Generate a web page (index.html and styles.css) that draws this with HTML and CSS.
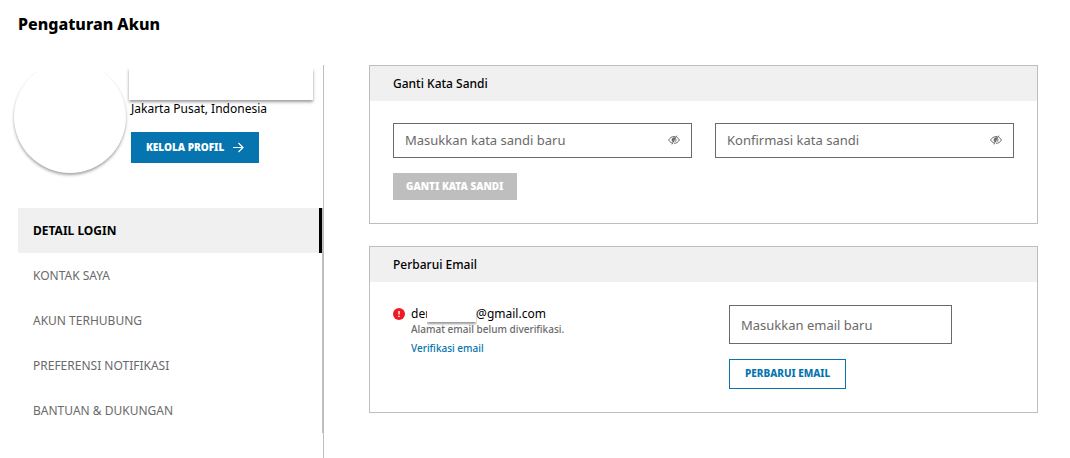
FILE: index.html
```html
<!DOCTYPE html>
<html lang="id">
<head>
    <meta charset="UTF-8">
    <meta name="viewport" content="width=device-width, initial-scale=1.0">
    <title>Pengaturan Akun</title>
    <link rel="stylesheet" href="styles.css">
</head>
<body>
    <h1 class="page-title">Pengaturan Akun</h1>

    <div class="layout">
        <aside class="sidebar">
            <div class="profile">
                <div class="avatar"></div>
                <div class="profile-info">
                    <div class="profile-name"></div>
                    <div class="profile-location">Jakarta Pusat, Indonesia</div>
                    <a class="button button-primary" href="#">
                        KELOLA PROFIL
                        <svg class="arrow" viewBox="0 0 12 12" aria-hidden="true">
                            <path d="M1 6.5h10M6.5 2L11 6.5 6.5 11"/>
                        </svg>
                    </a>
                </div>
            </div>

            <nav class="menu">
                <a class="menu-item active" href="#">DETAIL LOGIN</a>
                <a class="menu-item" href="#">KONTAK SAYA</a>
                <a class="menu-item" href="#">AKUN TERHUBUNG</a>
                <a class="menu-item" href="#">PREFERENSI NOTIFIKASI</a>
                <a class="menu-item" href="#">BANTUAN &amp; DUKUNGAN</a>
            </nav>
        </aside>

        <main class="content">
            <section class="card">
                <h2 class="card-title">Ganti Kata Sandi</h2>
                <form class="card-body">
                    <div class="password-row">
                        <div class="field">
                            <input class="field-input" type="password" placeholder="Masukkan kata sandi baru" aria-label="Masukkan kata sandi baru">
                            <button class="eye-button" type="button" aria-label="Tampilkan kata sandi">
                                <svg class="eye" viewBox="0 0 12 10" aria-hidden="true">
                                    <path d="M4.4 8.2C2.6 7.5 1.2 6.2.6 5 1.7 3 3.7 1.6 6 1.6c.6 0 1.1.1 1.6.2M9 2.4c1.1.6 1.9 1.5 2.4 2.6C10.3 7 8.3 8.4 6.2 8.4M8.9.6L3.9 9.4M7.8 4c.5 1.3 0 2.4-1.1 2.9"/>
                                    <path class="eye-fill" d="M7.6 2.6L5 7.2C3.3 6.3 3.1 4.3 4.5 3.1c.9-.8 2.1-.9 3.1-.5z"/>
                                </svg>
                            </button>
                        </div>
                        <div class="field">
                            <input class="field-input" type="password" placeholder="Konfirmasi kata sandi" aria-label="Konfirmasi kata sandi">
                            <button class="eye-button" type="button" aria-label="Tampilkan kata sandi">
                                <svg class="eye" viewBox="0 0 12 10" aria-hidden="true">
                                    <path d="M4.4 8.2C2.6 7.5 1.2 6.2.6 5 1.7 3 3.7 1.6 6 1.6c.6 0 1.1.1 1.6.2M9 2.4c1.1.6 1.9 1.5 2.4 2.6C10.3 7 8.3 8.4 6.2 8.4M8.9.6L3.9 9.4M7.8 4c.5 1.3 0 2.4-1.1 2.9"/>
                                    <path class="eye-fill" d="M7.6 2.6L5 7.2C3.3 6.3 3.1 4.3 4.5 3.1c.9-.8 2.1-.9 3.1-.5z"/>
                                </svg>
                            </button>
                        </div>
                    </div>
                    <button class="button button-disabled" type="submit" disabled>GANTI KATA SANDI</button>
                </form>
            </section>

            <section class="card">
                <h2 class="card-title">Perbarui Email</h2>
                <div class="card-body email-row">
                    <div class="email-status">
                        <svg class="alert" viewBox="0 0 12 12" aria-hidden="true">
                            <circle cx="6" cy="6" r="6" fill="#ed1c24"/>
                            <path d="M6 3v3.6M6 7.8v1.2" stroke="#fff" stroke-width="1.4"/>
                        </svg>
                        <div>
                            <div class="email-address">der<span class="email-mask"></span>@gmail.com</div>
                            <div class="email-note">Alamat email belum diverifikasi.</div>
                            <a class="email-link" href="#">Verifikasi email</a>
                        </div>
                    </div>
                    <form class="email-form">
                        <input class="field-input email-input" type="email" placeholder="Masukkan email baru" aria-label="Masukkan email baru">
                        <button class="button button-outline" type="submit">PERBARUI EMAIL</button>
                    </form>
                </div>
            </section>
        </main>
    </div>
</body>
</html>
```
FILE: styles.css
```css
* {
    box-sizing: border-box;
}
body {
    margin: 0;
    min-height: 100vh;
    display: flex;
    flex-direction: column;
    background-color: #fff;
    color: #000;
    font-family: "Noto Sans", sans-serif;
    font-size: 12px;
}
a {
    text-decoration: none;
}
.page-title {
    margin: 0;
    padding: 13px 18px 30px;
    font-size: 16px;
    line-height: 22px;
    font-weight: 800;
}
.layout {
    flex: 1;
    display: grid;
    grid-template-columns: 306px 1fr;
    column-gap: 45px;
    padding: 0 32px 0 18px;
}

/* sidebar */
.sidebar {
    border-right: 1px solid #bebebe;
}
.profile {
    display: flex;
    gap: 3px;
    height: 143px;
}
.avatar {
    flex: none;
    width: 112px;
    height: 112px;
    margin: -4px 0 0 -4px;
    border-radius: 50%;
    background-color: #fff;
    box-shadow: 0 2px 3px rgba(0, 0, 0, 0.35);
    clip-path: inset(10px -6px -8px -6px);
}
.profile-info {
    flex: 1;
    padding: 3px 10px 0 0;
}
.profile-name {
    height: 32px;
    background-color: #fff;
    box-shadow: 0 2px 3px rgba(0, 0, 0, 0.4);
    clip-path: inset(0 -6px -8px -6px);
}
.profile-location {
    padding-left: 2px;
    margin-bottom: 15px;
    line-height: 17px;
}
.menu {
    border-right: 1px solid #bebebe;
}
.menu-item {
    display: block;
    padding: 0 15px;
    color: #6a6a6a;
    line-height: 45px;
}
.menu-item.active {
    background-color: #f0f0f0;
    border-right: 3px solid #000;
    color: #000;
    font-weight: 700;
}

/* buttons */
.button {
    display: inline-flex;
    align-items: center;
    justify-content: center;
    border: none;
    font-family: inherit;
    font-size: 10px;
    font-weight: 900;
    white-space: nowrap;
}
.button-primary {
    gap: 8px;
    height: 31px;
    margin-left: 2px;
    padding: 0 15px 2px;
    background-color: #0574af;
    color: #fff;
}
.arrow {
    width: 12px;
    height: 12px;
    fill: none;
    stroke: #fff;
    stroke-width: 1.2;
}
.button-disabled {
    height: 27px;
    padding: 0 13px 1px;
    background-color: #bebebe;
    color: #fff;
}
.button-outline {
    height: 30px;
    padding: 0 15px 2px;
    background-color: #fff;
    border: 1px solid #0574af;
    color: #0574af;
    font-weight: 800;
}

/* cards */
.content {
    display: flex;
    flex-direction: column;
    gap: 22px;
}
.card {
    border: 1px solid #bebebe;
}
.card-title {
    margin: 0;
    padding: 0 23px;
    background-color: #f0f0f0;
    font-size: 12px;
    line-height: 35px;
    font-weight: 500;
}
.card-body {
    padding: 22px 23px 23px;
}
.password-row {
    display: grid;
    grid-template-columns: 1fr 1fr;
    gap: 23px;
    margin-bottom: 15px;
}
.field {
    position: relative;
}
.field-input {
    display: block;
    width: 100%;
    height: 35px;
    padding: 0 11px 1px;
    border: 1px solid #6a6a6a;
    border-radius: 0;
    background-color: #fff;
    font-family: inherit;
    font-size: 13px;
}
.field-input::placeholder {
    color: #6a6a6a;
}
.eye-button {
    position: absolute;
    top: 0;
    right: 12px;
    height: 34px;
    padding: 0;
    border: none;
    background: none;
    display: flex;
    align-items: center;
}
.eye {
    width: 12px;
    height: 10px;
    fill: none;
    stroke: #6a6a6a;
    stroke-width: 1;
}
.eye-fill {
    fill: #6a6a6a;
    stroke: none;
}
.email-row {
    display: grid;
    grid-template-columns: 336px 1fr;
    padding-top: 23px;
}
.email-status {
    display: flex;
    gap: 6px;
}
.alert {
    flex: none;
    width: 12px;
    height: 12px;
    margin-top: 3px;
}
.email-address {
    line-height: 17px;
}
.email-mask {
    display: inline-block;
    width: 49px;
    height: 14px;
    margin-left: -3px;
    vertical-align: -4px;
    background-color: #fff;
    box-shadow: 0 2px 2px rgba(0, 0, 0, 0.4);
    clip-path: inset(0 -1px -5px 0);
}
.email-note {
    color: #6a6a6a;
    font-size: 10px;
    font-weight: 500;
    line-height: 14px;
    margin-bottom: 5px;
}
.email-link {
    display: block;
    color: #0574af;
    font-size: 10px;
    font-weight: 500;
    line-height: 14px;
}
.email-form {
    display: flex;
    flex-direction: column;
    align-items: flex-start;
    gap: 15px;
}
.email-input {
    width: 223px;
    height: 39px;
    padding-bottom: 0;
}
```
